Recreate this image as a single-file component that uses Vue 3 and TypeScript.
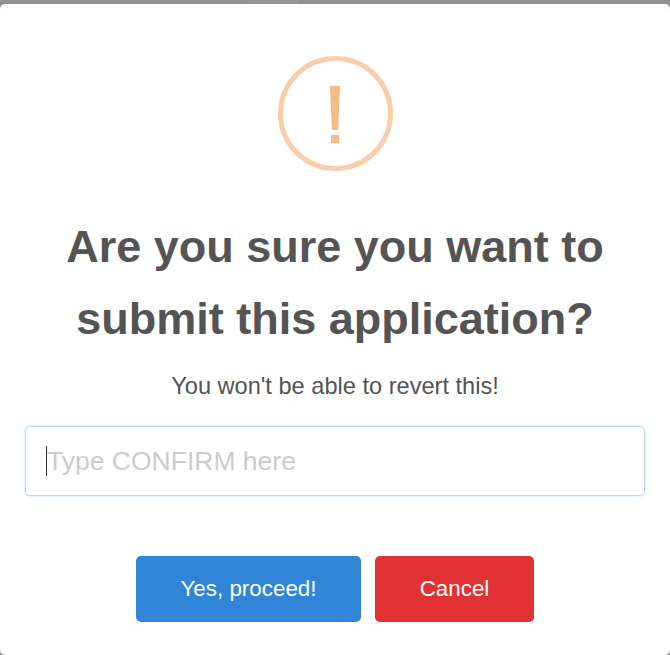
<script setup lang="ts">
const title = 'Are you sure you want to submit this application?'
const text = "You won't be able to revert this!"
</script>

<template>
  <div class="backdrop">
    <span class="strip"></span>
    <div class="modal">
      <div class="icon">
        <svg class="mark" width="12" height="58" viewBox="0 0 12 58" aria-hidden="true">
          <path d="M1 0H11L9.2 44H2.8Z" />
          <rect x="2" y="49" width="8" height="8" />
        </svg>
      </div>
      <h2 class="title">{{ title }}</h2>
      <p class="text">{{ text }}</p>
      <div class="field">
        <span class="caret"></span>
        <span class="placeholder">Type CONFIRM here</span>
      </div>
      <div class="actions">
        <button class="btn confirm" type="button">Yes, proceed!</button>
        <button class="btn cancel" type="button">Cancel</button>
      </div>
    </div>
  </div>
</template>

<style>
html, body { margin: 0; padding: 0; background: #fff; }
</style>

<style scoped>
.backdrop {
  width: 670px;
  height: 655px;
  background: #919191;
  padding-top: 4px;
  box-sizing: border-box;
  overflow: hidden;
  position: relative;
  font-family: "Liberation Sans", Arial, sans-serif;
}
.strip {
  position: absolute;
  top: 0;
  left: 248px;
  width: 50px;
  height: 4px;
  background: #979797;
}
.modal {
  height: 651px;
  box-sizing: border-box;
  background: #fff;
  border-radius: 5px;
  display: flex;
  flex-direction: column;
  align-items: center;
  padding: 52px 25px 0;
}
.icon {
  width: 115px;
  height: 115px;
  box-sizing: border-box;
  border: 5px solid #facea8;
  border-radius: 50%;
  display: flex;
  align-items: center;
  justify-content: center;
}
.mark {
  fill: #f8bb86;
  margin-top: 3px;
}
.title {
  margin: 40px 0 0;
  width: 100%;
  text-align: center;
  font-size: 45px;
  line-height: 72px;
  font-weight: 700;
  color: #545454;
}
.text {
  margin: 16px 0 0;
  font-size: 23.6px;
  line-height: 30px;
  color: #545454;
}
.field {
  margin-top: 25px;
  width: 100%;
  height: 70px;
  box-sizing: border-box;
  border: 1px solid #b4dbed;
  border-radius: 5px;
  box-shadow: 0 0 3px #c4e6f5;
  display: flex;
  align-items: center;
  padding-left: 20px;
}
.caret {
  width: 1px;
  height: 30px;
  background: #333;
  flex: none;
}
.placeholder {
  font-size: 26.5px;
  color: #ccc;
  margin-left: 0;
}
.actions {
  margin-top: 60px;
  display: flex;
  gap: 14px;
}
.btn {
  height: 66px;
  border: 0;
  border-radius: 5px;
  color: #fff;
  font: 22.4px "Liberation Sans", Arial, sans-serif;
  padding: 0;
}
.confirm { width: 225px; background: #3085d8; }
.cancel { width: 159px; background: #e03232; }
</style>
